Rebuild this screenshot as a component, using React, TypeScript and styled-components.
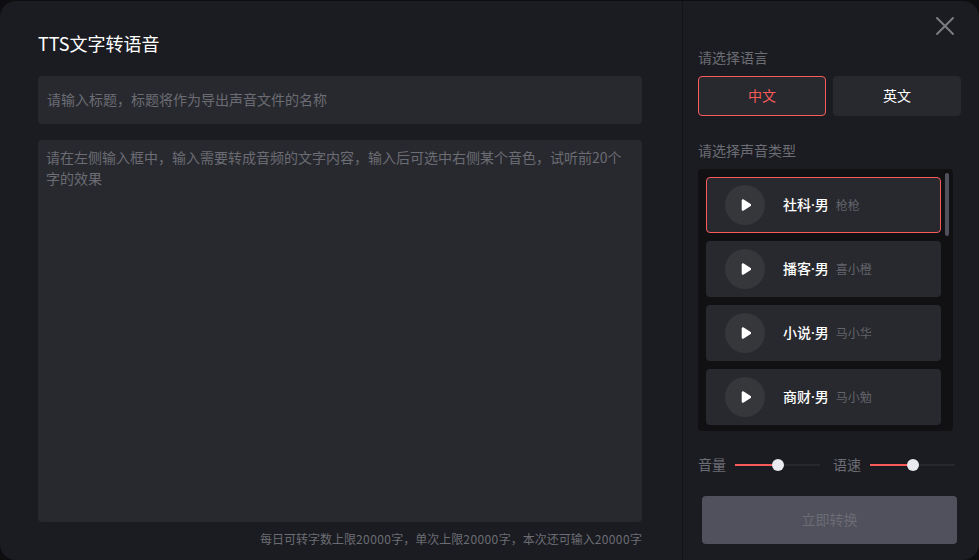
import React from 'react';
import styled, { createGlobalStyle } from 'styled-components';
import { X } from 'lucide-react';

const GlobalStyle = createGlobalStyle`
    html, body {
        margin: 0;
        padding: 0;
        width: 979px;
        height: 560px;
        overflow: hidden;
        background: #0e0e11;
        font-family: "Noto Sans CJK SC", "Noto Sans", sans-serif;
    }
    * { box-sizing: border-box; }
`;

const Modal = styled.div`
    margin-top: 1px;
    width: 979px;
    height: 559px;
    display: flex;
    background: #1b1c21;
    border-radius: 16px;
    overflow: hidden;
`;

const LeftPane = styled.div`
    width: 682px;
    flex-shrink: 0;
    display: flex;
    flex-direction: column;
    padding: 30px 40px 0 38px;
`;

const Title = styled.h1`
    margin: 0;
    height: 45px;
    line-height: 24px;
    font-size: 18px;
    font-weight: 400;
    color: #fff;
`;

const TitleInput = styled.input`
    width: 100%;
    height: 48px;
    flex-shrink: 0;
    padding: 0 9px 2px;
    border: none;
    border-radius: 4px;
    background: #28292e;
    color: #fff;
    font: 14px "Noto Sans CJK SC", sans-serif;
    &::placeholder { color: #6b6c74; opacity: 1; }
`;

const ContentInput = styled.textarea`
    width: 100%;
    height: 382px;
    margin-top: 16px;
    flex-shrink: 0;
    padding: 7px 8px;
    border: none;
    border-radius: 4px;
    background: #28292e;
    color: #fff;
    resize: none;
    font: 14px/21px "Noto Sans CJK SC", sans-serif;
    &::placeholder { color: #6b6c74; opacity: 1; }
`;

const Hint = styled.div`
    margin-top: 9px;
    text-align: right;
    font-size: 12px;
    line-height: 16px;
    color: #6b6c74;
`;

const Num = styled.span`
    letter-spacing: 0.4px;
`;

const RightPane = styled.div`
    flex: 1;
    display: flex;
    flex-direction: column;
    padding: 0 18px 0 15px;
    border-left: 1px solid #121317;
`;

const CloseRow = styled.div`
    height: 48px;
    flex-shrink: 0;
    display: flex;
    justify-content: flex-end;
    align-items: flex-start;
    padding: 9px 7px 0 0;
    color: #7c7d82;
`;

const Label = styled.div`
    font-size: 14px;
    line-height: 16px;
    padding-bottom: 2px;
    color: #6b6c74;
`;

const LangRow = styled.div`
    display: flex;
    gap: 7px;
    margin: 9px 0 26px;
`;

const LangButton = styled.button<{ $active?: boolean }>`
    width: 128px;
    height: 40px;
    padding: 0 0 2px;
    border-radius: 4px;
    border: 1px solid ${(p) => (p.$active ? '#f95b5b' : '#28292e')};
    background: #28292e;
    color: ${(p) => (p.$active ? '#f95b5b' : '#fff')};
    font: 14px "Noto Sans CJK SC", sans-serif;
`;

const VoiceList = styled.div`
    position: relative;
    width: 255px;
    height: 262px;
    margin-top: 9px;
    padding: 8px 12px 0 8px;
    display: flex;
    flex-direction: column;
    gap: 8px;
    overflow: hidden;
    border-radius: 4px;
    background: #111114;
`;

const ScrollThumb = styled.div`
    position: absolute;
    top: 4px;
    right: 4px;
    width: 4px;
    height: 63px;
    border-radius: 2px;
    background: #50515c;
`;

const VoiceItem = styled.div<{ $active?: boolean }>`
    height: 56px;
    flex-shrink: 0;
    display: flex;
    align-items: center;
    border-radius: 4px;
    border: ${(p) => (p.$active ? '1px solid #f95b5b' : 'none')};
    padding-left: ${(p) => (p.$active ? '18px' : '19px')};
    background: #28292e;
`;

const PlayCircle = styled.div`
    width: 40px;
    height: 40px;
    flex-shrink: 0;
    display: flex;
    align-items: center;
    justify-content: center;
    border-radius: 50%;
    background: #36373b;
`;

const VoiceName = styled.span`
    margin-left: 18px;
    padding-bottom: 2px;
    font-family: "Noto Sans", "Noto Sans CJK SC", sans-serif;
    font-size: 14px;
    font-weight: 500;
    color: #fff;
`;

const VoiceSpeaker = styled.span`
    margin-left: 7px;
    padding-bottom: 2px;
    font-size: 12px;
    color: #62636b;
`;

const SliderRow = styled.div`
    display: flex;
    align-items: center;
    margin-top: 25px;
    height: 18px;
`;

const SliderGroup = styled.div`
    width: 135px;
    display: flex;
    align-items: center;
`;

const SliderLabel = styled.span`
    width: 37px;
    flex-shrink: 0;
    padding-bottom: 2px;
    font-size: 14px;
    color: #6b6c74;
`;

const Track = styled.div`
    position: relative;
    width: 85px;
    height: 2px;
    background: #25282d;
`;

const TrackFill = styled.div`
    height: 100%;
    background: #f95b5b;
`;

const Thumb = styled.div`
    position: absolute;
    top: -5px;
    width: 12px;
    height: 12px;
    margin-left: -6px;
    border-radius: 50%;
    background: #e9e9f0;
`;

const ConvertButton = styled.button`
    width: 255px;
    height: 48px;
    margin: 22px 0 0 4px;
    padding: 0 0 2px;
    flex-shrink: 0;
    border: none;
    border-radius: 4px;
    background: #50515c;
    color: #6b6c74;
    font: 14px "Noto Sans CJK SC", sans-serif;
`;

const voices = [
    { name: '社科·男', speaker: '枪枪', active: true },
    { name: '播客·男', speaker: '喜小橙' },
    { name: '小说·男', speaker: '马小华' },
    { name: '商财·男', speaker: '马小勉' },
];

function PlayIcon() {
    return (
        <svg width="12" height="14" viewBox="-1.5 0 12 14">
            <path d="M2.5 2.5 L9.5 7 L2.5 11.5 Z" fill="#fff" stroke="#fff" strokeWidth="2.6" strokeLinejoin="round" />
        </svg>
    );
}

function Slider({ label, value }: { label: string; value: number }) {
    return (
        <SliderGroup>
            <SliderLabel>{label}</SliderLabel>
            <Track>
                <TrackFill style={{ width: `${value}%` }} />
                <Thumb style={{ left: `${value}%` }} />
            </Track>
        </SliderGroup>
    );
}

export default function App() {
    return (
        <>
            <GlobalStyle />
            <Modal>
                <LeftPane>
                    <Title>TTS文字转语音</Title>
                    <TitleInput placeholder="请输入标题，标题将作为导出声音文件的名称" />
                    <ContentInput placeholder="请在左侧输入框中，输入需要转成音频的文字内容，输入后可选中右侧某个音色，试听前20个字的效果" />
                    <Hint>
                        每日可转字数上限<Num>20000</Num>字，单次上限<Num>20000</Num>字，本次还可输入<Num>20000</Num>字
                    </Hint>
                </LeftPane>
                <RightPane>
                    <CloseRow>
                        <X size={32} strokeWidth={1.4} />
                    </CloseRow>
                    <Label>请选择语言</Label>
                    <LangRow>
                        <LangButton $active>中文</LangButton>
                        <LangButton>英文</LangButton>
                    </LangRow>
                    <Label>请选择声音类型</Label>
                    <VoiceList>
                        <ScrollThumb />
                        {voices.map((v) => (
                            <VoiceItem key={v.name} $active={v.active}>
                                <PlayCircle>
                                    <PlayIcon />
                                </PlayCircle>
                                <VoiceName>{v.name}</VoiceName>
                                <VoiceSpeaker>{v.speaker}</VoiceSpeaker>
                            </VoiceItem>
                        ))}
                    </VoiceList>
                    <SliderRow>
                        <Slider label="音量" value={50} />
                        <Slider label="语速" value={50} />
                    </SliderRow>
                    <ConvertButton>立即转换</ConvertButton>
                </RightPane>
            </Modal>
        </>
    );
}
